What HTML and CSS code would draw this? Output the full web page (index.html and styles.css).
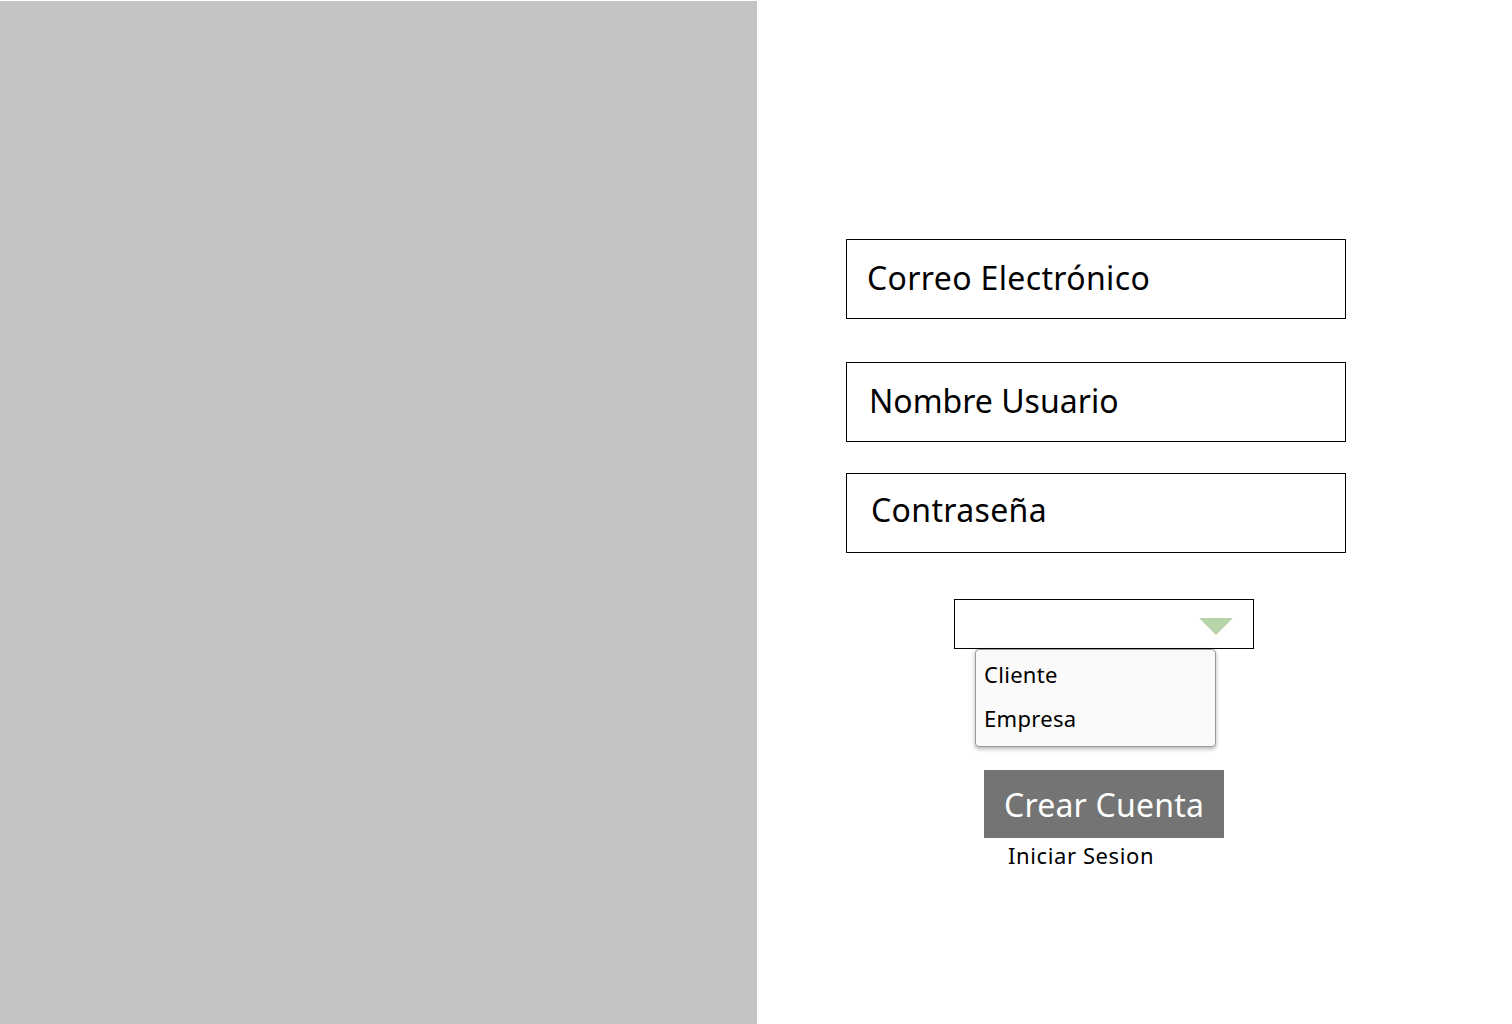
FILE: index.html
```html
<!DOCTYPE html>
<html lang="es">
<head>
<meta charset="utf-8">
<title>Crear Cuenta</title>
<link rel="stylesheet" href="styles.css">
</head>
<body>
<div class="page">
  <div class="side"></div>
  <main class="panel">
    <div class="field f1"><span>Correo Electrónico</span></div>
    <div class="field f2"><span>Nombre Usuario</span></div>
    <div class="field f3"><span>Contraseña</span></div>
    <div class="select">
      <svg class="caret" width="34" height="20" viewBox="0 0 34 20"><polygon points="0,2 34,2 17,19" fill="#b6d4a8"/></svg>
    </div>
    <ul class="menu">
      <li>Cliente</li>
      <li>Empresa</li>
    </ul>
    <div class="btn">Crear Cuenta</div>
    <div class="link">Iniciar Sesion</div>
  </main>
</div>
</body>
</html>
```
FILE: styles.css
```css
* { box-sizing: border-box; }
html, body { margin: 0; padding: 0; background: #fff; }
body { font-family: "Noto Sans", "Open Sans", sans-serif; color: #000; }
.page { display: flex; width: 1512px; height: 1024px; overflow: hidden; }
.side { width: 757px; height: 1023px; margin-top: 1px; background: #c4c4c4; flex: none; }
.panel { display: flex; flex-direction: column; align-items: flex-start; padding: 239px 0 0 89px; }
.field { width: 500px; height: 80px; border: 1px solid #000; display: flex; align-items: center; font-size: 32px; letter-spacing: 0.35px; }
.field span { margin-top: -3px; }
.f1 { padding-left: 20px; }
.f2 { margin-top: 43px; padding-left: 22px; letter-spacing: 0; }
.f3 { margin-top: 31px; padding-left: 24px; }
.f3 span { margin-top: -7px; }
.select { margin: 46px 0 0 108px; width: 300px; height: 50px; border: 1px solid #000; display: flex; align-items: center; justify-content: flex-end; padding-right: 20px; }
.caret { margin-top: 4px; }
.menu { list-style: none; margin: 0 0 0 129px; padding: 8px 0 12px 8px; width: 241px; background: #fafafa; border: 1px solid #9a9a9a; border-radius: 4px; box-shadow: 0 2px 4px rgba(0,0,0,0.3); font-size: 22px; letter-spacing: 0.3px; }
.menu li { height: 44px; line-height: 32px; }
.menu li:last-child { height: 32px; }
.btn { margin: 23px 0 0 138px; width: 240px; height: 68px; background: #737473; color: #fff; font-size: 32px; letter-spacing: 0.2px; display: flex; align-items: center; padding-left: 20px; }
.link { margin: 2px 0 0 162px; font-size: 22px; letter-spacing: 0.6px; }
```
